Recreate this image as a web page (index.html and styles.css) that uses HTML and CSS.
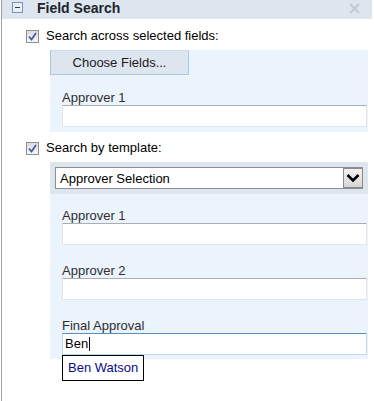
FILE: index.html
```html
<!DOCTYPE html>
<html>
<head>
  <meta charset="utf-8">
  <title>Field Search</title>
  <link rel="stylesheet" href="styles.css">
</head>
<body>
<div class="widget">

  <div class="header">
    <span class="toggle">
      <svg width="11" height="11" viewBox="0 0 11 11"><rect x="0.5" y="0.5" width="10" height="10" fill="#e8eef5" stroke="#7d92b9"/><line x1="3" y1="5.5" x2="8" y2="5.5" stroke="#3a3a3a"/></svg>
    </span>
    <span class="title">Field Search</span>
    <span class="close">
      <svg width="11" height="11" viewBox="0 0 11 11"><path d="M1 1 L10 10 M10 1 L1 10" stroke="#c6c9cc" stroke-width="2"/></svg>
    </span>
  </div>

  <!-- search across fields -->
  <div class="option">
    <span class="checkbox"><svg width="11" height="11" viewBox="0 0 11 11"><polyline points="2,5.5 4.5,8.5 9,2" fill="none" stroke="#3f5ca8" stroke-width="1.7"/></svg></span>
    <span class="option-label">Search across selected fields:</span>
  </div>
  <div class="section">
    <div class="choose-btn">Choose Fields...</div>
    <div class="fields">
      <div class="field">
        <div class="field-label">Approver 1</div>
        <div class="textbox"></div>
      </div>
    </div>
  </div>

  <!-- search by template -->
  <div class="option option-second">
    <span class="checkbox"><svg width="11" height="11" viewBox="0 0 11 11"><polyline points="2,5.5 4.5,8.5 9,2" fill="none" stroke="#3f5ca8" stroke-width="1.7"/></svg></span>
    <span class="option-label">Search by template:</span>
  </div>
  <div class="section section-template">
    <div class="template-bar">
      <div class="select">
        <span class="select-text">Approver Selection</span>
        <span class="select-btn"><svg width="18" height="18" viewBox="0 0 18 18"><polyline points="3.5,6 9,11.5 14.5,6" fill="none" stroke="#000" stroke-width="2.6"/></svg></span>
      </div>
    </div>
    <div class="fields">
      <div class="field">
        <div class="field-label">Approver 1</div>
        <div class="textbox"></div>
      </div>
      <div class="field">
        <div class="field-label">Approver 2</div>
        <div class="textbox"></div>
      </div>
      <div class="field">
        <div class="field-label">Final Approval</div>
        <div class="textbox textbox-focus">Ben<span class="caret"></span></div>
        <div class="suggest">Ben Watson</div>
      </div>
    </div>
  </div>

</div>
</body>
</html>
```

FILE: styles.css
```css
body { margin:0; background:#ffffff; font-family:"Liberation Sans", Arial, sans-serif; font-size:13px; color:#000000; }

.widget { margin-left:1px; width:370px; min-height:401px; border-left:1px solid #a3a3a3; }

/* header */
.header { display:flex; align-items:flex-start; height:19px; background:#dde6ee; }
.toggle { display:flex; margin:2px 0 0 10px; }
.title { margin-left:14px; font-size:14px; font-weight:bold; line-height:16px; color:#1e242b; }
.close { display:flex; margin:3px 12px 0 auto; }

/* checkbox rows */
.option { display:flex; align-items:center; height:16px; padding:9px 0 0 24px; margin-bottom:6px; }
.option-second { padding-top:8px; }
.checkbox { display:flex; align-items:center; justify-content:center; width:11px; height:11px; border:1px solid #8e8f8f;
            background:linear-gradient(#dcdcdc, #f7f7f7); margin-right:7px; }
.option-label { line-height:16px; }

/* light blue panels */
.section { margin:0 4px 0 48px; background:#ebf3fd; }
.choose-btn { box-sizing:border-box; width:139px; height:25px; line-height:23px; text-align:center;
              background:#dde5ee; border:1px solid #a9c7e8; border-top-color:#c9dcf0; color:#1b1b1b; }
.fields { display:flex; flex-direction:column; gap:18px; padding:15px 2px 5px 12px; }
.section-template .fields { padding-top:14px; padding-bottom:4px; }
.field { position:relative; }
.field-label { line-height:15px; color:#2e2e2e; }
.textbox { box-sizing:border-box; height:22px; width:305px; background:#ffffff; line-height:20px; padding-left:2px;
           border:1px solid #e1e6ec; border-top-color:#abadb3; }
.textbox-focus { border-color:#b9daf0; border-top-color:#5b8fb9; }
.caret { display:inline-block; width:1px; height:14px; background:#000; vertical-align:-3px; margin-left:1px; }
.suggest { position:absolute; left:0; top:100%; padding:4px 5px 5px; line-height:15px; background:#ffffff;
           border:1px solid #000000; color:#0a0a8a; }

/* template select */
.template-bar { background:#dde6ee; padding:5px; }
.select { display:flex; align-items:center; height:20px; background:#ffffff; border:1px solid #8d8e8f; }
.select-text { flex:1; padding-left:4px; }
.select-btn { display:flex; box-sizing:border-box; width:20px; height:20px; border:1px solid #8a8a8a;
              background:linear-gradient(#f2f2f2, #d6d6d6); margin-right:-1px; }
```
